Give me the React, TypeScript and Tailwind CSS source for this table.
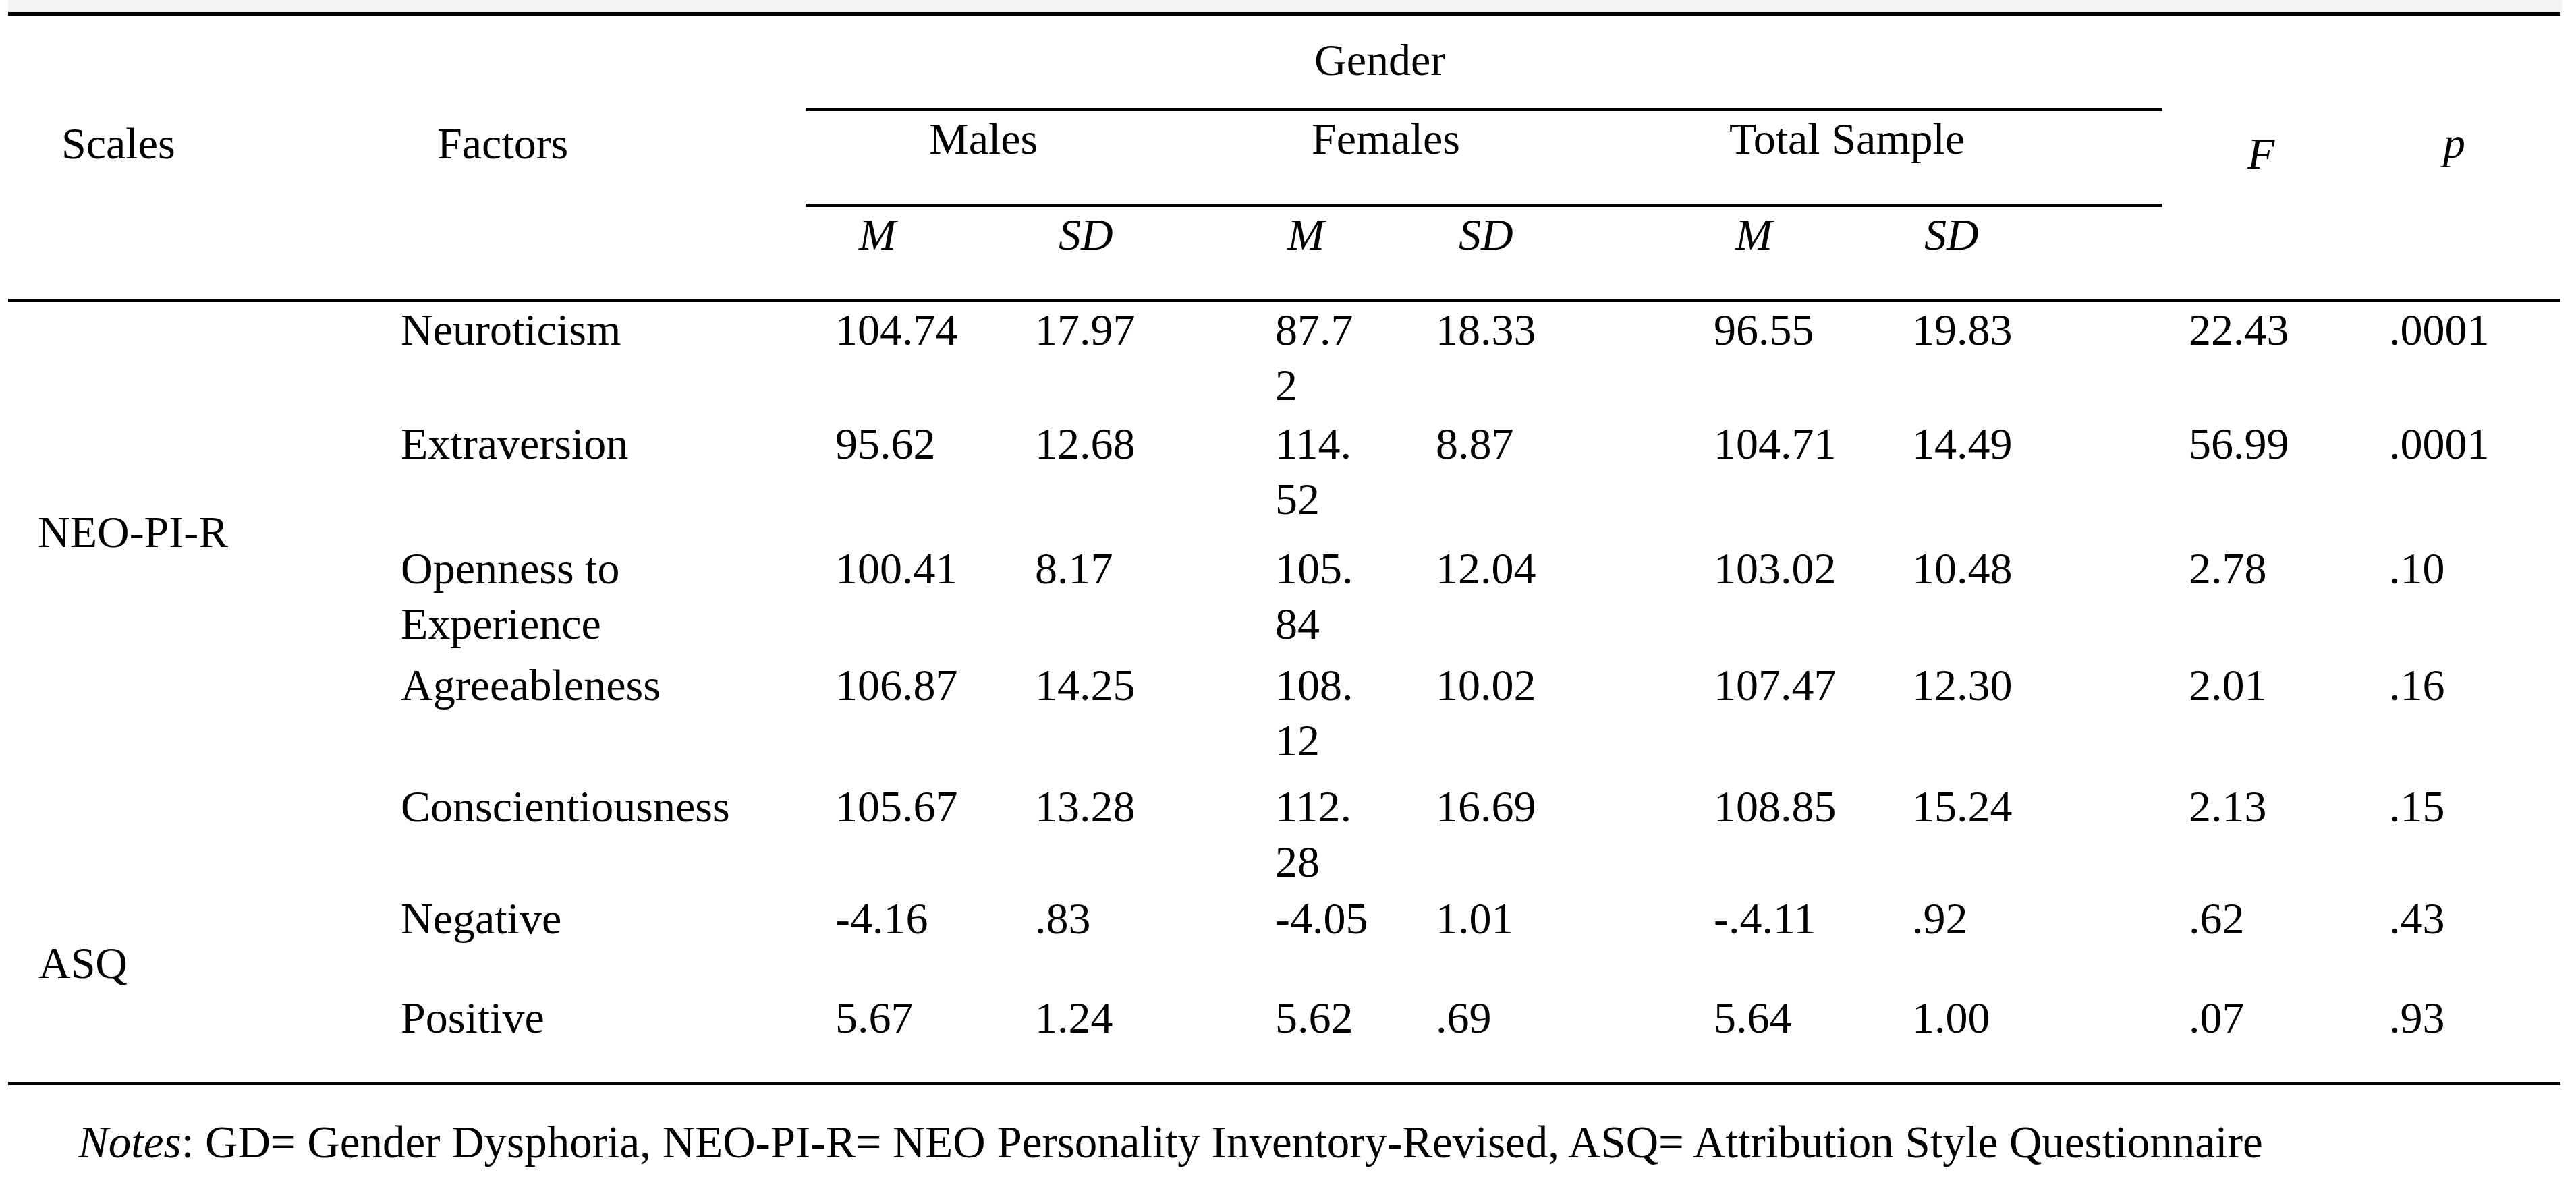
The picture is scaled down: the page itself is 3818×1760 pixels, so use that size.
import React from "react";

const rows: string[][] = [
  ["Neuroticism", "104.74", "17.97", "87.72", "18.33", "96.55", "19.83", "22.43", ".0001"],
  ["Extraversion", "95.62", "12.68", "114.52", "8.87", "104.71", "14.49", "56.99", ".0001"],
  ["Openness to Experience", "100.41", "8.17", "105.84", "12.04", "103.02", "10.48", "2.78", ".10"],
  ["Agreeableness", "106.87", "14.25", "108.12", "10.02", "107.47", "12.30", "2.01", ".16"],
  ["Conscientiousness", "105.67", "13.28", "112.28", "16.69", "108.85", "15.24", "2.13", ".15"],
  ["Negative", "-4.16", ".83", "-4.05", "1.01", "-.4.11", ".92", ".62", ".43"],
  ["Positive", "5.67", "1.24", "5.62", ".69", "5.64", "1.00", ".07", ".93"],
];

function Rule() {
  return <div className="h-[5px] bg-black" />;
}

export default function App() {
  return (
    <div className="w-[3818px] h-[1760px] bg-white text-black font-['Liberation_Serif','Times_New_Roman',serif] text-[66px] leading-[82px] overflow-hidden">
      <div className="ml-[12px] w-[3783px]">
        <div className="h-[18px] w-[3785px] bg-[#f2f2f2]" />
        <Rule />

        {/* Header */}
        <div className="grid grid-cols-[588px_594px_2011px_295px_295px] h-[420px]">
          <div className="pl-[79px] pt-[149px]">Scales</div>
          <div className="pl-[48px] pt-[149px]">Factors</div>
          <div className="flex flex-col">
            <div className="h-[137px] pl-[754px] pt-[25px]">Gender</div>
            <Rule />
            <div className="h-[137px] grid grid-cols-[522px_674px_815px]">
              <div className="pl-[183px]">Males</div>
              <div className="pl-[228px]">Females</div>
              <div className="pl-[173px]">Total Sample</div>
            </div>
            <Rule />
            <div className="h-[136px] flex pl-[79px] italic">
              <div className="w-[296px]">M</div>
              <div className="w-[339px]">SD</div>
              <div className="w-[254px]">M</div>
              <div className="w-[410px]">SD</div>
              <div className="w-[280px]">M</div>
              <div>SD</div>
            </div>
          </div>
          <div className="pl-[126px] pt-[164px] italic">F</div>
          <div className="pl-[121px] pt-[148px] italic">p</div>
        </div>
        <Rule />

        {/* Body */}
        <div className="grid grid-cols-[582px_644px_296px_356px_238px_412px_294px_410px_297px_254px] grid-rows-[169px_185px_173px_180px_166px_147px_136px]">
          <div className="col-start-1 row-start-1 row-span-5 pl-[44px] pt-[300px]">NEO-PI-R</div>
          <div className="col-start-1 row-start-6 row-span-2 pl-[45px] pt-[66px]">ASQ</div>
          {rows.map((r, i) =>
            r.map((cell, j) => (
              <div key={`${i}-${j}`}>
                {j === 0 ? (
                  <div className="w-[560px]">{cell}</div>
                ) : j === 3 ? (
                  <div className="w-[140px] break-all">{cell}</div>
                ) : (
                  <div>{cell}</div>
                )}
              </div>
            ))
          )}
        </div>
        <Rule />

        <div className="pl-[104px] pt-[43px] whitespace-nowrap text-[67px]">
          <span className="italic">Notes</span>: GD= Gender Dysphoria, NEO-PI-R= NEO Personality Inventory-Revised, ASQ= Attribution Style Questionnaire
        </div>
      </div>
    </div>
  );
}
